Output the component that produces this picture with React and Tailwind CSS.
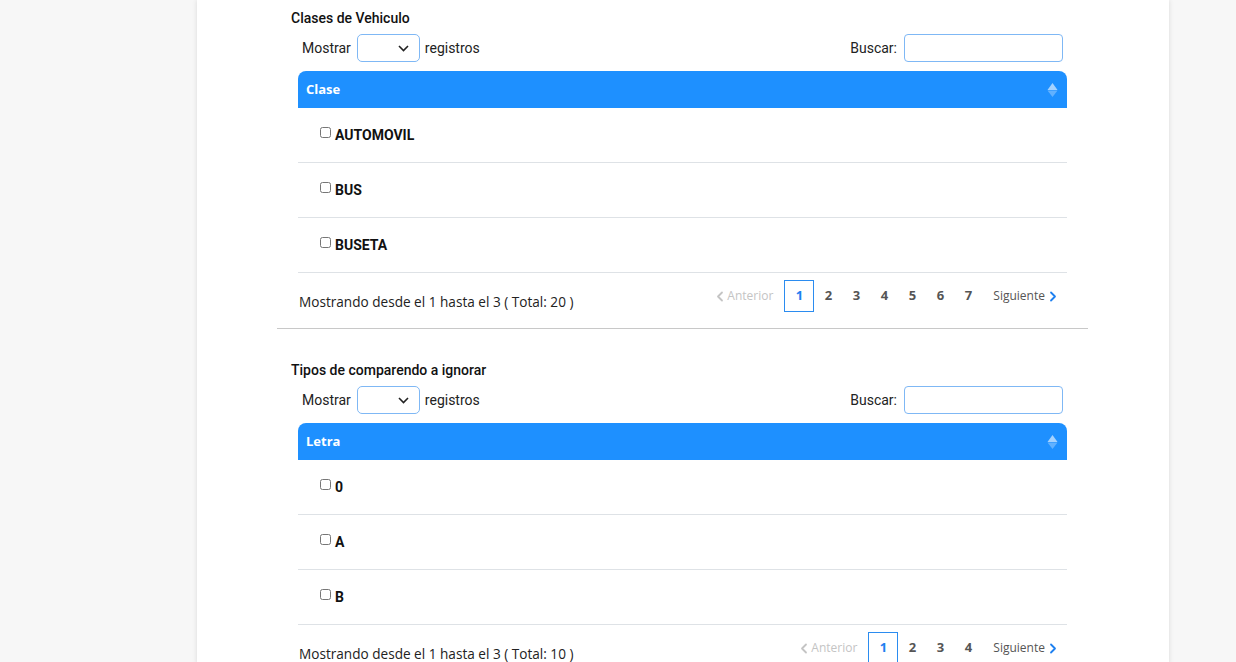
import React from "react";

function SortIcon() {
  return (
    <svg width="11" height="16" viewBox="0 0 11 16" className="block">
      <path d="M5.5 1 L10.5 8 L0.5 8 Z" fill="#ffffff" fillOpacity="0.6" />
      <path d="M5.5 15 L10.5 8.6 L0.5 8.6 Z" fill="#ffffff" fillOpacity="0.3" />
    </svg>
  );
}

function Chevron({ dir, color }) {
  return (
    <svg width="8" height="11" viewBox="0 0 8 11" className="block">
      <path
        d={dir === "left" ? "M6 1.5 L2 5.5 L6 9.5" : "M2 1.5 L6 5.5 L2 9.5"}
        fill="none"
        stroke={color}
        strokeWidth="1.8"
        strokeLinecap="round"
        strokeLinejoin="round"
      />
    </svg>
  );
}

function Section({ title, header, rows, total, pages }) {
  return (
    <div className="pt-[9px]">
      <div className="pl-[14px] text-[14px] leading-[18px] font-medium text-[#111] font-['Roboto',sans-serif]">
        {title}
      </div>
      <div className="mx-[21px]">
        <div className="mt-[7px] flex items-center justify-between h-[28px] px-[4px] font-['Roboto',sans-serif] text-[14px] text-[#222]">
          <div className="flex items-center">
            <span>Mostrar</span>
            <div className="ml-[6px] mr-[5px] w-[63px] h-[28px] rounded-[5px] border border-[#7fb8f5] flex items-center justify-end pr-[10px]">
              <svg width="11" height="7" viewBox="0 0 11 7">
                <path d="M1 1 L5.5 5.5 L10 1" fill="none" stroke="#222" strokeWidth="1.6" />
              </svg>
            </div>
            <span>registros</span>
          </div>
          <div className="flex items-center">
            <span>Buscar:</span>
            <div className="ml-[7px] w-[159px] h-[28px] rounded-[4px] border border-[#7fb8f5] bg-white" />
          </div>
        </div>
        <div className="mt-[9px] h-[37px] bg-[#1e90ff] rounded-t-[8px] flex items-center justify-between pl-[8px] pr-[9px]">
          <span className="text-white font-bold text-[13px] font-['Open_Sans',sans-serif]">{header}</span>
          <SortIcon />
        </div>
        {rows.map((r) => (
          <div key={r} className="h-[55px] border-b border-[#dee2e6] pl-[22px] pt-[17px] flex items-start font-['Roboto',sans-serif] text-[14px] font-bold text-[#111]">
            <input
              type="checkbox"
              className="w-[11px] h-[11px] m-0 mt-[2px] mr-[4px] shrink-0"
            />
            <span className="leading-[20px]">{r}</span>
          </div>
        ))}
        <div className="flex items-start justify-between">
          <div className="pt-[19px] pl-[1px] text-[13.6px] leading-[20px] text-[#222] font-['Open_Sans',sans-serif]">
            Mostrando desde el 1 hasta el 3 ( Total: {total} )
          </div>
          <div className="mt-[7px] pr-[10px] flex items-center h-[32px] font-['Open_Sans',sans-serif] text-[13px]">
            <div className="flex items-center text-[#c4c4c4] mr-[11px] text-[12px]">
              <Chevron dir="left" color="#c4c4c4" />
              <span className="ml-[3px]">Anterior</span>
            </div>
            <div className="w-[30px] h-[32px] border border-[#2b8cf0] flex items-center justify-center text-[#1e80f0] font-bold">
              1
            </div>
            {pages.map((p) => (
              <div key={p} className="w-[28px] h-[32px] flex items-center justify-center text-[#555] font-bold">
                {p}
              </div>
            ))}
            <div className="flex items-center text-[#555] ml-[11px] text-[12px]">
              <span className="mr-[4px]">Siguiente</span>
              <Chevron dir="right" color="#1e80f0" />
            </div>
          </div>
        </div>
      </div>
    </div>
  );
}

export default function App() {
  return (
    <div className="min-h-screen bg-[#f7f7f7] overflow-hidden">
      <div className="ml-[197px] w-[972px] min-h-[662px] bg-white shadow-[0_0_5px_rgba(0,0,0,0.12)]">
        <div className="ml-[80px] w-[811px]">
          <Section
            title="Clases de Vehiculo"
            header="Clase"
            rows={["AUTOMOVIL", "BUS", "BUSETA"]}
            total="20"
            pages={["2", "3", "4", "5", "6", "7"]}
          />
          <div className="mt-[16px] h-px bg-[#c8c8c8]" />
          <div className="pt-[23px]">
            <Section
              title="Tipos de comparendo a ignorar"
              header="Letra"
              rows={["0", "A", "B"]}
              total="10"
              pages={["2", "3", "4"]}
            />
          </div>
        </div>
      </div>
    </div>
  );
}
